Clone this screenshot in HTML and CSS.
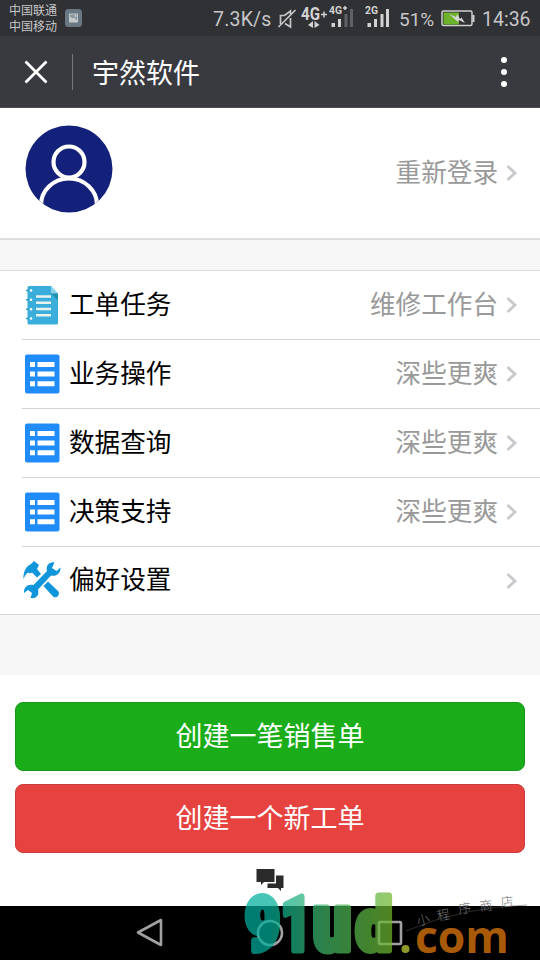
FILE: index.html
```html
<!DOCTYPE html>
<html lang="zh-CN">
<head>
<meta charset="utf-8">
<title>宇然软件</title>
<link rel="stylesheet" href="styles.css">
</head>
<body>
<div class="screen">
  <header class="status">
    <div class="carriers"><span>中国联通</span><span>中国移动</span></div>
    <svg class="shot" width="17" height="18" viewBox="0 0 17 18"><rect width="17" height="18" rx="3.500" fill="#697883"/><rect x="4" y="4.500" width="9" height="9" fill="#c4c9cc"/><path d="M5 5.500h7v6L9 8.500l-1.500 1L5 7.500z" fill="#8a969e"/><circle cx="10.500" cy="7" r="1" fill="#c4c9cc"/></svg>
    <span class="speed">7.3K/s</span>
    <svg class="signals" width="116" height="32" viewBox="275 2 116 32">
      <g fill="none" stroke="#c6c6c8" stroke-width="1.700"><path d="M280.500 24v-8.500h4l6-4.500v4M285 23.500l5.500 3.500v-9M278.500 27l17-17"/></g>
      <text x="301" y="19.500" font-size="18" font-weight="700" textLength="19" lengthAdjust="spacingAndGlyphs">4G</text>
      <path d="M308 25l5-4v7zM319.500 25l-5-4v7z"/>
      <path d="M321 14.500h6M324 11.500v6M343 8h4M345 6v4" fill="none" stroke="#d2d2d3" stroke-width="1.500"/>
      <text x="329" y="13.500" font-size="10" font-weight="700" textLength="13" lengthAdjust="spacingAndGlyphs">4G</text>
      <path d="M331.500 23h3.500v4h-3.500zM338 19h3v8h-3z"/><path fill="#606165" d="M344.500 14h3v13h-3zM350 9h3v18h-3z"/>
      <text x="365" y="13.500" font-size="10" font-weight="700" textLength="13" lengthAdjust="spacingAndGlyphs">2G</text>
      <path d="M367.500 23h3.500v4h-3.500zM374 19h3v8h-3zM380.500 14h3v13h-3zM386 9h3v18h-3z"/>
    </svg>
    <span class="percent">51%</span>
    <svg class="battery" width="34" height="17" viewBox="0 0 34 17"><rect x="1" y="1" width="30" height="14.500" rx="1.500" fill="none" stroke="#d0d0d1" stroke-width="1.500"/><path d="M31.500 5h2v7h-2z" fill="#d0d0d1"/><path d="M2.500 2.500H18v12H2.500z" fill="#6db22b"/><path d="M8 4l7 3 1-3 3 5 1.500-1.500L24 13l-6-3-1 2z" fill="#d6d6d7"/></svg>
    <span class="time">14:36</span>
  </header>
  <nav class="titlebar">
    <svg width="26" height="26" viewBox="0 0 26 26"><path d="M2.500 2.500l21 21M23.500 2.500l-21 21" stroke="#fff" stroke-width="2.800"/></svg>
    <i class="divider"></i>
    <h1>宇然软件</h1>
    <div class="more"><i></i><i></i><i></i></div>
  </nav>
  <section class="profile">
    <svg class="avatar" width="88" height="88" viewBox="0 0 88 88"><defs><clipPath id="disc"><circle cx="44" cy="44" r="43.500"/></clipPath></defs><circle cx="44" cy="44" r="43.500" fill="#13217a"/><g clip-path="url(#disc)" fill="none" stroke="#fff" stroke-width="4.200"><circle cx="44" cy="37" r="15.500"/><path d="M16 80a28 26.500 0 0 1 56 0"/></g></svg>
    <span class="value">重新登录</span>
    <svg class="chev" viewBox="0 0 12 18"><path d="M1.500 2l7.500 7-7.500 7"/></svg>
  </section>
  <ul class="menu">
    <li>
      <svg class="icon" viewBox="0 0 38 40"><path d="M6 1h22l7 8v29a1.500 1.500 0 0 1-1.500 1.500H6A1.500 1.500 0 0 1 4.500 38V2.500A1.500 1.500 0 0 1 6 1z" fill="#3aaedb"/><path d="M28 1v7.500h7z" fill="#8bd3e9"/><path d="M28 8.500h7v7z" fill="#258fae"/><path d="M13 11.500h15M13 17.800h15M13 24h15M13 30.300h15" stroke="#e8f2ef" stroke-width="2.400"/><path d="M3 5.500h4M3 14.800h4M3 24.200h4M3 33.500h4" stroke="#2e9cc5" stroke-width="1.500"/><g fill="#fff"><circle cx="8" cy="5.500" r="1.300"/><circle cx="8" cy="14.800" r="1.300"/><circle cx="8" cy="24.200" r="1.300"/><circle cx="8" cy="33.500" r="1.300"/></g></svg>
      <span class="label">工单任务</span><span class="value">维修工作台</span>
      <svg class="chev" viewBox="0 0 12 18"><path d="M1.500 2l7.500 7-7.500 7"/></svg>
    </li>
    <li>
      <svg class="icon" viewBox="0 0 38 40"><rect x="2" y=".5" width="34.500" height="39" rx="2" fill="#208cfa"/><path d="M7 8h5v5H7zM14.500 8h17v5h-17zM7 17.500h5v5H7zM14.500 17.500h17v5h-17zM7 27.300h5v5H7zM14.500 27.300h17v5h-17z" fill="#fff"/></svg>
      <span class="label">业务操作</span><span class="value">深些更爽</span>
      <svg class="chev" viewBox="0 0 12 18"><path d="M1.500 2l7.500 7-7.500 7"/></svg>
    </li>
    <li>
      <svg class="icon" viewBox="0 0 38 40"><rect x="2" y=".5" width="34.500" height="39" rx="2" fill="#208cfa"/><path d="M7 8h5v5H7zM14.500 8h17v5h-17zM7 17.500h5v5H7zM14.500 17.500h17v5h-17zM7 27.300h5v5H7zM14.500 27.300h17v5h-17z" fill="#fff"/></svg>
      <span class="label">数据查询</span><span class="value">深些更爽</span>
      <svg class="chev" viewBox="0 0 12 18"><path d="M1.500 2l7.500 7-7.500 7"/></svg>
    </li>
    <li>
      <svg class="icon" viewBox="0 0 38 40"><rect x="2" y=".5" width="34.500" height="39" rx="2" fill="#208cfa"/><path d="M7 8h5v5H7zM14.500 8h17v5h-17zM7 17.500h5v5H7zM14.500 17.500h17v5h-17zM7 27.300h5v5H7zM14.500 27.300h17v5h-17z" fill="#fff"/></svg>
      <span class="label">决策支持</span><span class="value">深些更爽</span>
      <svg class="chev" viewBox="0 0 12 18"><path d="M1.500 2l7.500 7-7.500 7"/></svg>
    </li>
    <li>
      <svg class="icon" viewBox="0 0 38 40"><g fill="#1296db"><path d="M.5 19C0 12 3 6 8 4l3-3 5 4-2 4 4 5-4 3.500-5-5-2 1-2-1C3 14 1.500 16 .5 19z"/><path d="M20.500 26l4.500-4.500 10 9.500c3 3-1.500 8.500-5 5.500z"/><path d="M31.500 2.500c-5-1-9 3-7.500 8.500L10.500 25C5 23.500.500 27 1 33l4-3 4 3-1.500 5c6 1 9-3 7.500-8.500L28 15.500c5 1.500 10-2.500 9.500-8l-4 3.500-4.500-3z"/></g></svg>
      <span class="label">偏好设置</span><span class="value"></span>
      <svg class="chev" viewBox="0 0 12 18"><path d="M1.500 2l7.500 7-7.500 7"/></svg>
    </li>
  </ul>
  <main class="actions">
    <button class="sale">创建一笔销售单</button>
    <button class="order">创建一个新工单</button>
    <svg class="chat" width="28" height="24" viewBox="0 0 28 24"><path d="M.5 1h18v13H8l-3 3v-3H.5zM20 7.500h7.500V20h-2.500v3l-3-3H11.500v-4.500H20z" fill="#2b2b2b"/></svg>
  </main>
  <footer class="keys">
    <svg width="28" height="30" viewBox="0 0 28 30"><path d="M25 2v25L2 14.500z"/></svg>
    <svg width="28" height="30" viewBox="0 0 28 30"><circle cx="14" cy="15" r="12"/></svg>
    <svg width="28" height="30" viewBox="0 0 28 30"><rect x="3" y="4" width="22" height="22" rx="1"/></svg>
  </footer>
  <svg class="watermark" width="300" height="80" viewBox="240 880 300 80">
    <defs><linearGradient id="fade" gradientUnits="userSpaceOnUse" x1="243" y1="0" x2="393" y2="0"><stop offset="0" stop-color="#00aea0"/><stop offset=".18" stop-color="#00ae98"/><stop offset=".5" stop-color="#3ab36c"/><stop offset="1" stop-color="#70b82c"/></linearGradient></defs>
    <g class="mark" fill="url(#fade)" stroke="url(#fade)" stroke-width="7" stroke-linejoin="round" opacity=".72">
      <text x="245" y="950" font-size="75" textLength="35" lengthAdjust="spacingAndGlyphs">9</text>
      <text x="281" y="950" font-size="75" textLength="30" lengthAdjust="spacingAndGlyphs">1</text>
      <text x="313" y="950" font-size="79" textLength="38" lengthAdjust="spacingAndGlyphs">u</text>
      <text x="356" y="950" font-size="72" textLength="36" lengthAdjust="spacingAndGlyphs">d</text>
    </g>
    <g class="brand"><circle cx="405.500" cy="949" r="4" fill="#8e9a27"/><text x="415" y="953" font-size="45" fill="#a85a08" textLength="94" lengthAdjust="spacingAndGlyphs">com</text></g>
    <path d="M406 931Q462 907 527 905" fill="none" stroke="#555" stroke-width=".5"/>
    <g class="store" font-size="13" fill="#77777a"><text transform="translate(418 926) rotate(-15)">小</text><text transform="translate(438 921) rotate(-12)">程</text><text transform="translate(459 914) rotate(-9)">序</text><text transform="translate(480 911) rotate(-6)">商</text><text transform="translate(501 907) rotate(-5)">店</text></g>
  </svg>
</div>
</body>
</html>
```
FILE: styles.css
```css
* { box-sizing: border-box; }
body { margin: 0; background: #fff; font-family: Roboto, "Noto Sans CJK SC", sans-serif; }
svg { display: block; flex: none; }
.screen { position: relative; width: 540px; height: 960px; overflow: hidden; display: flex; flex-direction: column; }
.status { height: 36px; flex: none; background: #303135; color: #c6c6c8; display: flex; align-items: center; padding: 0 9px; }
.carriers { display: flex; flex-direction: column; width: 56px; font-size: 12px; line-height: 16px; white-space: nowrap; padding-top: 2px; }
.speed { width: 59px; margin-left: 131px; font-size: 19.5px; white-space: nowrap; padding-top: 2px; letter-spacing: .2px; }
.signals { margin-left: 3px; fill: #d2d2d3; }
.percent { width: 36px; margin-left: 8px; font-size: 19px; padding-top: 2px; white-space: nowrap; }
.battery { margin-left: 6px; }
.time { margin-left: 7px; font-size: 19.5px; padding-top: 2px; }
.titlebar { height: 72px; flex: none; background: #393a3f; border-bottom: 1px solid #4c4c50; display: flex; align-items: center; padding: 0 33px 0 23px; color: #fff; }
.divider { width: 1px; height: 36px; background: #77787b; margin: 0 19px 0 23px; }
.titlebar h1 { margin: 0; flex: 1; font-size: 27px; font-weight: 400; line-height: 36px; padding-top: 4px; }
.more { display: flex; flex-direction: column; gap: 6px; }
.more i { width: 6px; height: 6px; border-radius: 50%; background: #fff; }
.profile { height: 132px; flex: none; display: flex; align-items: center; padding: 0 22px 0 24px; border-bottom: 2px solid #dedede; }
.avatar { margin: 0 -1px 8px 1px; }
.value { flex: 1; text-align: right; color: #999; font-size: 25.6px; line-height: 36px; margin-right: 8px; }
.chev { width: 12px; height: 18px; fill: none; stroke: #c8c8cd; stroke-width: 2.8; }
.menu { list-style: none; margin: 0; padding: 1px 0 0 22px; height: 375px; flex: none; border-top: 30px solid #f7f7f7; box-shadow: inset 0 1px #dadada; }
.menu li { height: 69px; display: flex; align-items: center; padding-right: 22px; border-bottom: 1px solid #d4d4d4; }
.menu li .value, .menu li .label { padding-bottom: 1px; }
.menu li:last-child { height: 67px; border: 0; }
.icon { width: 38px; height: 40px; margin: 0 8px 1px 1px; }
.label { color: #000; font-size: 25.6px; line-height: 36px; }
.actions { height: 291px; flex: none; border-top: 60px solid #f7f7f7; box-shadow: 0 -1px #d6d6d6; padding: 27px 15px 0; display: flex; flex-direction: column; align-items: center; gap: 13px; }
button { width: 100%; height: 69px; flex: none; border: 1px solid #17981a; border-radius: 8px; padding: 0 0 5px; font-family: inherit; font-size: 27px; color: #fff; }
.sale { background: #1aad19; }
.order { background: #e64340; border-color: #c93e3b; }
.chat { margin-top: 2px; }
.keys { height: 54px; flex: none; background: #000; display: flex; justify-content: space-between; align-items: center; padding: 0 136px; }
.keys svg { fill: none; stroke: #a2a0a2; stroke-width: 2.6; stroke-linejoin: round; }
.watermark { position: absolute; left: 240px; top: 880px; overflow: visible; }
.mark { font-family: Roboto, sans-serif; font-weight: 900; }
.brand { font-family: "Open Sans", "Noto Sans", sans-serif; font-weight: 700; }
.store { font-family: "Noto Sans CJK SC", sans-serif; font-weight: 300; }
```
